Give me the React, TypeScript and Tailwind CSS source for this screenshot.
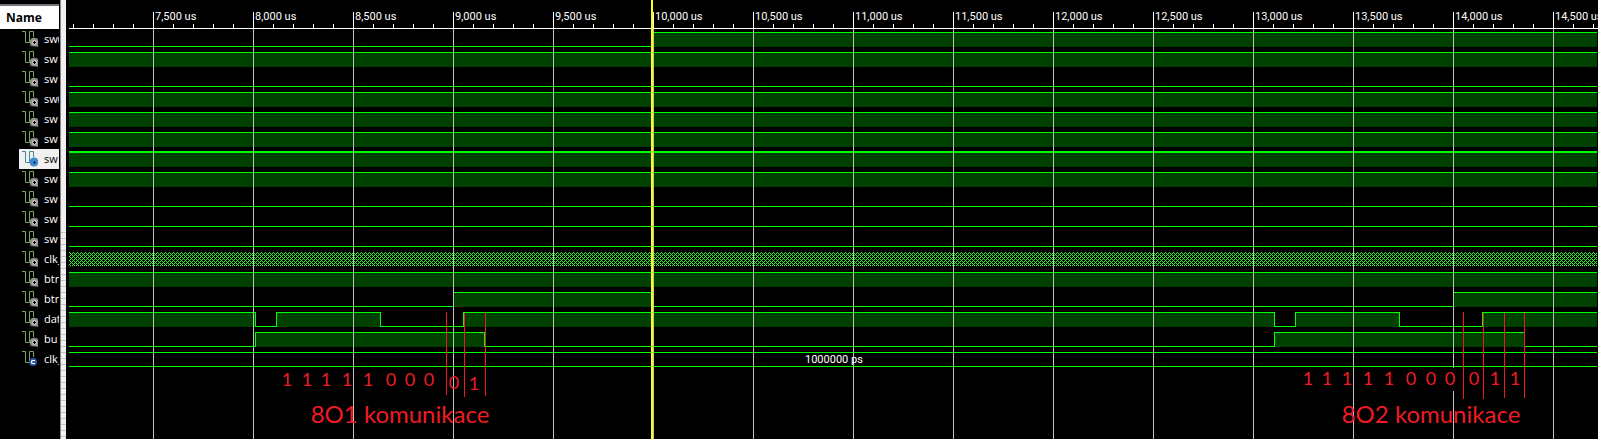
import React from "react";

type Kind = "wave" | "clock" | "bus";
type Signal = {
  name: string;
  kind: Kind;
  start?: 0 | 1;
  edges?: number[];
  selected?: boolean;
  constant?: boolean;
};

const END = 8000;
const ORIGIN = 69;

const signals: Signal[] = [
  { name: "sw(", kind: "wave", start: 0, edges: [653] },
  { name: "sw", kind: "wave", start: 1 },
  { name: "sw", kind: "wave", start: 0 },
  { name: "sw(", kind: "wave", start: 1 },
  { name: "sw", kind: "wave", start: 1 },
  { name: "sw", kind: "wave", start: 1 },
  { name: "sw", kind: "wave", start: 1, selected: true },
  { name: "sw", kind: "wave", start: 1 },
  { name: "sw", kind: "wave", start: 0 },
  { name: "sw", kind: "wave", start: 0 },
  { name: "sw", kind: "wave", start: 0 },
  { name: "clk_", kind: "clock" },
  { name: "btn", kind: "wave", start: 1 },
  { name: "btn", kind: "wave", start: 0, edges: [453, 652, 1453] },
  { name: "dat", kind: "wave", start: 1, edges: [255, 276, 380, 463, 1274, 1295, 1399, 1482] },
  { name: "bu", kind: "wave", start: 0, edges: [255, 484, 1274, 1524] },
  { name: "clk_", kind: "bus", constant: true },
];

const ticks = Array.from({ length: 40 }, (_, i) => ({
  x: 153 - ORIGIN + i * 100,
  label: `${(7500 + i * 500).toLocaleString("en-US")} us`,
}));

const minorTicks = Array.from({ length: 200 }, (_, i) => 4 + i * 20);

type Note = { text: string; x: number; y: number };

const bits: Note[] = [
  ...[287, 307, 326, 347, 368].map((x) => ({ text: "1", x, y: 379 })),
  ...[391, 410, 429].map((x) => ({ text: "0", x, y: 379 })),
  { text: "0", x: 454, y: 382 },
  { text: "1", x: 474, y: 383 },
  ...[1308, 1327, 1347, 1368, 1389].map((x) => ({ text: "1", x, y: 378 })),
  ...[1411, 1431, 1450, 1474].map((x) => ({ text: "0", x, y: 378 })),
  ...[1495, 1515].map((x) => ({ text: "1", x, y: 378 })),
];

const titles: Note[] = [
  { text: "8O1 komunikace", x: 400, y: 414 },
  { text: "8O2 komunikace", x: 1431, y: 414 },
];

const markers = [
  [446, 312, 395],
  [464, 313, 397],
  [485, 312, 396],
  [1463, 312, 399],
  [1483, 313, 399],
  [1504, 313, 398],
  [1524, 313, 398],
];

function SignalIcon({ selected, constant }: { selected?: boolean; constant?: boolean }) {
  const line = selected ? "#3b8f9b" : "#78a860";
  return (
    <svg className="h-5 w-4 shrink-0" viewBox="0 0 16 20" aria-hidden="true">
      <path d="M0 2.5H3.5V13.5H7.5V2.5H11.5V8" fill="none" stroke={line} strokeWidth="1" />
      {constant ? (
        <>
          <circle cx="11" cy="13" r="4" fill="#2f55a4" />
          <path d="M13 11.5H10.5Q9.5 11.5 9.5 13T10.5 14.5H13" fill="none" stroke="#fff" strokeWidth="1.2" />
        </>
      ) : selected ? (
        <>
          <circle cx="12" cy="13" r="4.5" fill="#3f8ac8" />
          <path d="M12.5 12V15M11 13.5H14" stroke="#0b3a6b" strokeWidth="1" />
        </>
      ) : (
        <>
          <path d="M7.5 17.5L9 9H16V17.5Z" fill="#3c3c3c" />
          <path d="M13 17.5H16V14.5Z" fill="#9a9a9a" />
          <circle cx="12" cy="13" r="4.3" fill="#8d8d8d" />
          <circle cx="12.5" cy="13.5" r="2.6" fill="#bcbcbc" />
          <path d="M12.5 12V15M11 13.5H14" stroke="#000" strokeWidth="1" />
        </>
      )}
    </svg>
  );
}

function Wave({ signal }: { signal: Signal }) {
  if (signal.kind === "clock") {
    return (
      <svg className="block h-5 w-full" shapeRendering="crispEdges" aria-hidden="true">
        <defs>
          <pattern id="hatch" width="4" height="4" patternUnits="userSpaceOnUse" y="3">
            <path d="M0 0h1v1h-1zM1 1h1v1h-1zM3 1h1v1h-1zM2 2h1v1h-1zM1 3h1v1h-1zM3 3h1v1h-1z" fill="#20ff20" />
          </pattern>
        </defs>
        <rect y="3" width="100%" height="14" fill="url(#hatch)" />
      </svg>
    );
  }
  if (signal.kind === "bus") {
    return (
      <svg className="block h-5 w-full" shapeRendering="crispEdges" aria-hidden="true">
        <rect y="3" width="100%" height="1" fill="#00ff00" />
        <rect y="17" width="100%" height="1" fill="#00ff00" />
      </svg>
    );
  }
  const edges = (signal.edges ?? []).map((x) => x - ORIGIN);
  const bounds = [0, ...edges, END];
  return (
    <svg className="block h-5 w-full" shapeRendering="crispEdges" aria-hidden="true">
      {bounds.slice(0, -1).map((from, i) => {
        const width = bounds[i + 1] - from;
        const high = ((signal.start ?? 0) + i) % 2 === 1;
        return high ? (
          <g key={from}>
            <rect x={from} y="3" width={width} height="15" fill="#004000" />
            <rect x={from} y={signal.selected ? 2 : 3} width={width} height={signal.selected ? 2 : 1} fill="#00ff00" />
          </g>
        ) : (
          <rect key={from} x={from} y="17" width={width} height="1" fill="#00ff00" />
        );
      })}
      {edges.map((x) => (
        <rect key={x} x={x} y="3" width="1" height="15" fill="#00ff00" />
      ))}
    </svg>
  );
}

export default function App() {
  return (
    <div className="relative flex min-h-screen overflow-hidden bg-black font-['Open_Sans','Noto_Sans',sans-serif] text-white">
      <aside className="flex w-15 shrink-0 flex-col overflow-hidden pr-px">
        <div className="h-1 shrink-0" />
        <h2 className="h-[25px] shrink-0 border-t-2 border-[#70747a] bg-white pl-[6px] text-[12px] leading-[23px] font-bold text-black">
          Name
        </h2>
        <ul>
          {signals.map((s, i) => (
            <li
              key={i}
              className={
                s.selected
                  ? "ml-[19px] flex h-5 gap-[6px] overflow-hidden bg-[#f0f0f0] pl-[3px] text-[11px] leading-5 font-medium text-black"
                  : "ml-[19px] flex h-5 gap-[6px] overflow-hidden pl-[3px] text-[11px] leading-5 font-medium"
              }
            >
              <SignalIcon selected={s.selected} constant={s.constant} />
              <span className="whitespace-nowrap">{s.name}</span>
            </li>
          ))}
        </ul>
      </aside>

      <div
        role="separator"
        aria-orientation="vertical"
        className="flex w-[6px] shrink-0 flex-col border-l border-[#8a8a8e] bg-[#f0f0f0]"
      >
        <div className="h-[232px]" />
        <div className="flex-1 bg-[repeating-linear-gradient(to_bottom,#c4c4c4_0px,#c4c4c4_1px,#f0f0f0_1px,#f0f0f0_6px)]" />
      </div>

      <main className="relative ml-[3px] min-w-0 flex-1 overflow-hidden">
        <header className="h-[29px]">
          <svg className="block h-[29px] w-full" shapeRendering="crispEdges">
            {minorTicks.map((x) => (
              <rect key={x} x={x} y="24" width="1" height="4" fill="#fff" />
            ))}
            {ticks.map((t) => (
              <g key={t.x}>
                <rect x={t.x} y="12" width="1" height="16" fill="#fff" />
                <text x={t.x + 2} y="20" fill="#fff" fontSize="11" className="font-['Roboto',sans-serif]">
                  {t.label}
                </text>
              </g>
            ))}
            <rect y="28" width="100%" height="1" fill="#fff" />
          </svg>
        </header>
        <div className="mr-px">
          {signals.map((s, i) => (
            <Wave key={i} signal={s} />
          ))}
        </div>
        <svg className="absolute inset-0 h-full w-full" shapeRendering="crispEdges" aria-hidden="true">
          {ticks.map((t) => (
            <rect key={t.x} x={t.x} y="29" width="1" height="100%" fill="#c0c0c0" />
          ))}
          <rect x="1384" y="368" width="1" height="23" fill="#000" />
          <rect x="582" y="0" width="2" height="100%" fill="#ffff00" />
          {markers.map(([x, top, bottom]) => (
            <rect key={x} x={x - ORIGIN} y={top} width="1" height={bottom - top} fill="#ed1c24" />
          ))}
        </svg>
        <span className="absolute top-[352px] left-[736px] font-['Roboto',sans-serif] text-[11px] leading-4">
          1000000 ps
        </span>
      </main>

      {bits.map((n) => (
        <span
          key={n.x}
          className="absolute -translate-x-1/2 -translate-y-1/2 font-['Lato',sans-serif] text-[18px] leading-5 text-[#ed1c24]"
          style={{ left: n.x, top: n.y }}
        >
          {n.text}
        </span>
      ))}
      {titles.map((n) => (
        <span
          key={n.x}
          className="absolute -translate-x-1/2 -translate-y-1/2 font-['Lato',sans-serif] text-[24px] leading-7 whitespace-nowrap text-[#ed1c24]"
          style={{ left: n.x, top: n.y }}
        >
          {n.text}
        </span>
      ))}
    </div>
  );
}
